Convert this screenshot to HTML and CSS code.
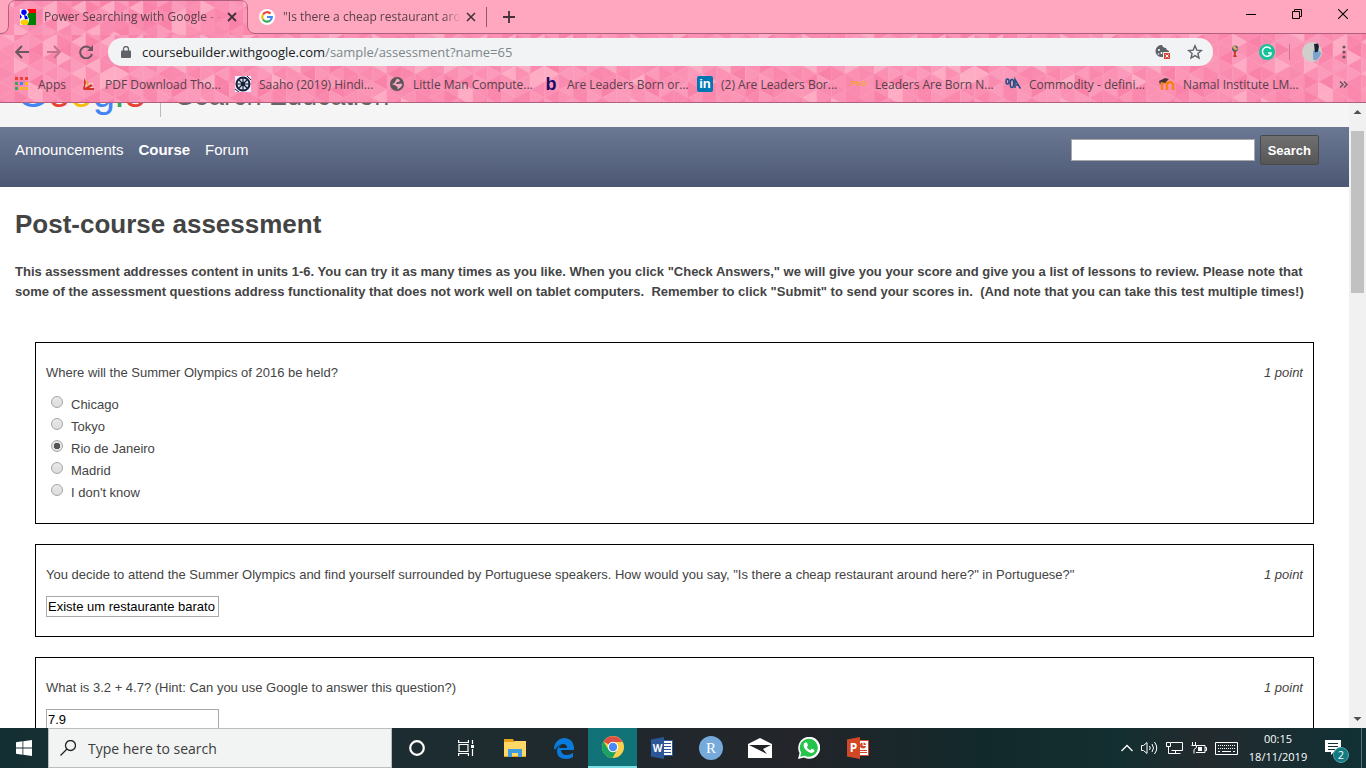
FILE: index.html
```html
<!DOCTYPE html>
<html lang="en">
<head>
<meta charset="utf-8">
<title>Power Searching with Google</title>
<link rel="stylesheet" href="styles.css">
</head>
<body>
<header class="browser">
  <div class="tabstrip">
    <div class="tab tab-active">
      <svg class="tab-shape" width="256" height="35" viewBox="0 0 256 35"><path d="M0 35V33.500C5 33.500 8.500 31 8.500 25V8C8.500 3 11.500 .5 16 .5H240C245 .5 247.500 3 247.500 8V25C247.500 31 251 33.500 256 33.500V35Z" fill="url(#mesh)"/><path d="M0 33.500C5 33.500 8.500 31 8.500 25V8C8.500 3 11.500 .5 16 .5H240C245 .5 247.500 3 247.500 8V25C247.500 31 251 33.500 256 33.500" fill="none" stroke="#b0607e"/></svg>
      <svg class="icon" viewBox="0 0 16 16"><path fill="#fff" d="M0 0h16v16H0z"/><path fill="#f00" d="M7 0h9v5H7z"/><path fill="#008000" d="M7 5l3-1h6v12H7l2-4z"/><path fill="#fff" d="M7 0l2 3-2 3 2 4-1 2-2-2V0z"/><circle cx="4" cy="3.300" r="2.700" fill="#00f"/><path fill="#00f" d="M0 5l2 3-2 2zM4 6l3 1 1 3-3 .5z"/><ellipse cx="4.500" cy="13.200" rx="4" ry="2.800" fill="#fc0"/></svg>
      <span class="tab-title">Power Searching with Google - -</span>
      <button class="close" aria-label="Close tab"><svg width="10" height="10" viewBox="0 0 10 10"><path d="M1 1l8 8M9 1L1 9" stroke="#42323a" stroke-width="1.800"/></svg></button>
    </div>
    <div class="tab">
      <svg class="icon" viewBox="0 0 16 16"><circle cx="8" cy="8" r="8" fill="#fff"/><g fill="none" stroke-width="2.200"><path stroke="#ea4335" d="M4 5.500A4.800 4.800 0 0 1 11.500 4.600"/><path stroke="#fbbc05" d="M4 5.500a4.800 4.800 0 0 0 0 5"/><path stroke="#34a853" d="M4 10.500a4.800 4.800 0 0 0 7.200 1"/><path stroke="#4285f4" d="M11.200 11.500A4.800 4.800 0 0 0 12.800 8H8"/></g></svg>
      <span class="tab-title">"Is there a cheap restaurant around</span>
      <button class="close" aria-label="Close tab"><svg width="10" height="10" viewBox="0 0 10 10"><path d="M1 1l8 8M9 1L1 9" stroke="#42323a" stroke-width="1.600"/></svg></button>
    </div>
    <button class="newtab" aria-label="New tab"><svg width="12" height="12" viewBox="0 0 12 12"><path d="M6 0v12M0 6h12" stroke="#42323a" stroke-width="1.800"/></svg></button>
    <div class="wincontrols">
      <button aria-label="Minimize"><svg width="10" height="10"><path d="M0 5.500h10" stroke="#000"/></svg></button>
      <button aria-label="Restore"><svg width="10" height="10" fill="none" stroke="#000"><path d="M.5 2.500h7v7h-7zM2.500 2V.5h7v7H8"/></svg></button>
      <button aria-label="Close"><svg width="10" height="10"><path d="M0 0l10 10M10 0L0 10" stroke="#000" stroke-width="1.100"/></svg></button>
    </div>
  </div>
  <div class="toolbars">
    <svg class="mesh" aria-hidden="true"><defs><pattern id="mesh" width="430" height="112" patternUnits="userSpaceOnUse"></pattern></defs><rect width="100%" height="100%" fill="url(#mesh)"/></svg>
    <div class="toolbar">
      <button aria-label="Back"><svg width="14" height="14" viewBox="0 0 14 14"><path d="M7 1L1.200 7 7 13M1.500 7H14" fill="none" stroke="#6b5560" stroke-width="2"/></svg></button>
      <button aria-label="Forward"><svg width="14" height="14" viewBox="0 0 14 14"><path d="M7 1l5.800 6L7 13M12.500 7H0" fill="none" stroke="#c5718e" stroke-width="2"/></svg></button>
      <button aria-label="Reload"><svg width="14" height="14" viewBox="0 0 14 14"><path d="M12 3.800A6 6 0 1 0 13 9" fill="none" stroke="#6b5560" stroke-width="2"/><path d="M14 0v6H8z" fill="#6b5560"/></svg></button>
      <div class="omnibox">
        <svg width="10" height="12" viewBox="0 0 10 12"><path d="M1 4.500h8q1 0 1 1V11q0 1-1 1H1q-1 0-1-1V5.500q0-1 1-1z" fill="#5f6368"/><path d="M2.500 5V3a2.500 2.500 0 0 1 5 0v2" fill="none" stroke="#5f6368" stroke-width="1.300"/></svg>
        <span class="url">coursebuilder.withgoogle.com<span class="path">/sample/assessment?name=65</span></span>
        <svg width="16" height="16" viewBox="0 0 16 16"><path fill="#5f6368" d="M7 1q1 3 4 3 0 2 3 3v6H6A6 6 0 0 1 7 1z"/><circle cx="4" cy="6" r="1" fill="#fff"/><circle cx="6.500" cy="9" r="1" fill="#fff"/><circle cx="3.500" cy="10" r=".8" fill="#fff"/><path fill="#db4437" stroke="#f1f3f4" d="M8.500 8.500h7v7h-7z"/><path d="M10.500 10.500l3 3m0-3l-3 3" stroke="#fff"/></svg>
        <svg width="16" height="16" viewBox="0 0 16 16"><path d="M8 1.800l1.800 4.300 4.600.4-3.500 3 1.100 4.600-4-2.500-4 2.500 1.100-4.600-3.500-3 4.600-.4z" fill="none" stroke="#5f6368" stroke-width="1.400"/></svg>
      </div>
      <button aria-label="Football extension"><svg width="16" height="16" viewBox="0 0 16 16"><circle cx="8" cy="4.500" r="3" fill="#375f70"/><path d="M5 3q1-1.500 3-1.500l1 2 2 1-2 2-2-1z" fill="#d9a25d"/><path d="M6.500 7h3l-1 3 1.500 3H6l1-3z" fill="#c83932"/></svg></button>
      <button aria-label="Grammar extension"><svg width="16" height="16" viewBox="0 0 16 16"><circle cx="8" cy="8" r="8" fill="#15c39a"/><path d="M11.800 5A4.600 4.600 0 1 0 12 10V9H9" fill="none" stroke="#fff" stroke-width="1.500"/></svg></button>
      <span class="divider"></span>
      <button aria-label="Profile"><svg width="20" height="20" viewBox="0 0 20 20"><circle cx="10" cy="10" r="10" fill="#cfd0cc"/><path d="M11 9l3-2 5 3.500q-.5 5-5 8l-3-1z" fill="#7ea4cf"/><path d="M12 2l4-.5 1 3-1 5-3 1z" fill="#172232"/></svg></button>
      <button aria-label="Menu"><svg width="4" height="14"><circle cx="2" cy="2" r="1.600" fill="#6b5560"/><circle cx="2" cy="7" r="1.600" fill="#6b5560"/><circle cx="2" cy="12" r="1.600" fill="#6b5560"/></svg></button>
    </div>
    <nav class="bookmarks" aria-label="Bookmarks">
      <a class="apps" href="#"><svg class="icon" viewBox="0 0 16 16"><path fill="#ea4335" d="M1 1h3v3H1zM6 1h3v3H6zM11 1h3v3h-3z"/><path fill="#34a853" d="M1 6h3v3H1z"/><path fill="#4285f4" d="M6 6h3v3H6z"/><path fill="#fbbc05" d="M11 6h3v3h-3zM6 11h3v3H6zM11 11h3v3h-3z"/><path fill="#34a853" d="M1 11h3v3H1z"/></svg>Apps</a>
      <a href="#"><svg class="icon" viewBox="0 0 16 16"><path fill="#f8c9cf" d="M4 7h8v7H4z"/><path fill="#d5342b" d="M3 2l2 4-1 6 6-4 2 2-4 2h5v2H3q-2-2 0-4z"/><path fill="#e6a626" d="M5 3l1 7 2-2z"/></svg>PDF Download Tho...</a>
      <a href="#"><svg class="icon" viewBox="0 0 16 16"><path fill="#eef" d="M0 0h16v16H0z"/><circle cx="8" cy="8" r="6.500" fill="#dfe5f0" stroke="#131d38" stroke-width="2"/><path d="M8 2v12M2 8h12M4 4l8 8M12 4l-8 8" stroke="#131d38" stroke-width="1.200"/><circle cx="8" cy="8" r="2" fill="#131d38"/><path d="M0 13l4 3M12 0l4 4" stroke="#131d38"/></svg>Saaho (2019) Hindi...</a>
      <a href="#"><svg class="icon" viewBox="0 0 16 16"><circle cx="8" cy="8" r="7" fill="#5b5558"/><path fill="#f9a9c2" d="M8 2.500l3 1.500-1 2H8L7 8h2l3-.5 1.500 1-2 3-3 2v-2.500l-2-1.500-4-1.500 2.500-.5z"/></svg>Little Man Compute...</a>
      <a href="#"><b class="icon letter-b">b</b>Are Leaders Born or...</a>
      <a href="#"><b class="icon linkedin">in</b>(2) Are Leaders Bor...</a>
      <a href="#"><b class="icon phd">PhD</b>Leaders Are Born N...</a>
      <a href="#"><svg class="icon" viewBox="0 0 16 16" fill="none" stroke="#174f86" stroke-width="1.500"><ellipse cx="2.500" cy="5.500" rx="1.500" ry="2.500"/><ellipse cx="7" cy="7.500" rx="1.800" ry="4"/><path d="M10 12V3.500l5.500 9M11 9h2"/></svg>Commodity - defini...</a>
      <a href="#"><svg class="icon" viewBox="0 0 16 16"><path d="M3 14V8q3-4 5 0v6-6q3-4 6 0v6" fill="none" stroke="#f98012" stroke-width="2.400"/><path d="M0 5l6-3 4 1-4 4-4-1-1 3z" fill="#4a3535"/></svg>Namal Institute LM...</a>
      <button class="more" aria-label="More bookmarks"><svg width="9" height="7" viewBox="0 0 9 7"><path d="M1 .5l3 3-3 3M5 .5l3 3-3 3" fill="none" stroke="#6b5560" stroke-width="1.500"/></svg></button>
    </nav>
  </div>
</header>

<div class="viewport">
  <main class="page">
    <div class="masthead">
      <span class="logo"><span class="blue">G</span><span class="red">o</span><span class="yellow">o</span><span class="blue">g</span><span class="green">l</span><span class="red">e</span></span>
      <span class="product">Search Education</span>
    </div>
    <nav class="coursenav">
      <a href="#">Announcements</a>
      <a href="#" class="current">Course</a>
      <a href="#">Forum</a>
      <form class="search"><input type="text" aria-label="Search course"><button type="button">Search</button></form>
    </nav>
    <div class="content">
      <h1>Post-course assessment</h1>
      <p class="intro">This assessment addresses content in units 1-6. You can try it as many times as you like. When you click "Check Answers," we will give you your score and give you a list of lessons to review. Please note that some of the assessment questions address functionality that does not work well on tablet computers.&nbsp; Remember to click "Submit" to send your scores in.&nbsp; (And note that you can take this test multiple times!)</p>
      <div class="questions">
        <section class="question">
          <div class="prompt"><span>Where will the Summer Olympics of 2016 be held?</span><em>1 point</em></div>
          <div class="options">
            <label><input type="radio" name="q1">Chicago</label>
            <label><input type="radio" name="q1">Tokyo</label>
            <label><input type="radio" name="q1" checked>Rio de Janeiro</label>
            <label><input type="radio" name="q1">Madrid</label>
            <label><input type="radio" name="q1">I don't know</label>
          </div>
        </section>
        <section class="question">
          <div class="prompt"><label for="q2">You decide to attend the Summer Olympics and find yourself surrounded by Portuguese speakers. How would you say, "Is there a cheap restaurant around here?" in Portuguese?"</label><em>1 point</em></div>
          <input class="answer" id="q2" type="text" value="Existe um restaurante barato por aqui?">
        </section>
        <section class="question">
          <div class="prompt"><label for="q3">What is 3.2 + 4.7? (Hint: Can you use Google to answer this question?)</label><em>1 point</em></div>
          <input class="answer" id="q3" type="text" value="7.9">
        </section>
      </div>
    </div>
  </main>
  <div class="scrollbar" aria-hidden="true">
    <svg width="17" height="17"><path d="M4.500 11L8.500 7l4 4z" fill="#505050"/></svg>
    <div class="track"><div class="thumb"></div></div>
    <svg width="17" height="17"><path d="M4.500 6l4 4 4-4z" fill="#505050"/></svg>
  </div>
</div>

<footer class="taskbar">
  <button class="start" aria-label="Start"><svg width="16" height="16" viewBox="0 0 16 16"><path fill="#fff" d="M0 2.200L6.500 1.300V7.500H0zM7.300 1.200L16 0v7.500H7.300zM0 8.500h6.500v6.200L0 13.800zM7.300 8.500H16V16l-8.700-1.200z"/></svg></button>
  <label class="wsearch"><svg width="16" height="16" viewBox="0 0 16 16"><circle cx="10.500" cy="5.500" r="5" fill="none" stroke="#222" stroke-width="1.300"/><path d="M7 9L.5 15.500" stroke="#222" stroke-width="1.300"/></svg><input type="text" placeholder="Type here to search" aria-label="Type here to search"></label>
  <button aria-label="Cortana"><svg width="16" height="16"><circle cx="8" cy="8" r="6.800" fill="none" stroke="#fff" stroke-width="2.200"/></svg></button>
  <button aria-label="Task view"><svg width="16" height="16" fill="none" stroke="#fff" stroke-width="1.200"><path d="M1 4.500h9v7H1zM.6 0v2.500h9.800V0M.6 16v-2.500h9.800V16M14.500 0v4M14.500 9v7"/><path d="M13 5h3v3h-3z" fill="#fff" stroke="none"/></svg></button>
  <button aria-label="File Explorer"><svg width="22" height="18" viewBox="0 0 22 18"><path fill="#e5a217" d="M0 0h9l1 2h12v16H0z"/><path fill="#ffd767" d="M0 3h10l1-1h11v15H0z"/><path fill="#3d9de0" d="M4 18v-8h14v8h-4v-4H8v4z"/></svg></button>
  <button aria-label="Edge"><svg width="20" height="21" viewBox="0 0 20 21"><path fill="#0a7bdb" d="M0 10C1 3 6 0 11 0q8 1 9 9v3H7q0 5 6 5 3 0 6-2v4q-3 2-7 2-9 0-9-8 0-5 5-7-3 2-3 4h8q0-4-4-4-5 0-8 6z"/></svg></button>
  <button class="running" aria-label="Chrome"><svg width="22" height="22" viewBox="0 0 22 22"><circle cx="11" cy="11" r="11" fill="#fcd04b"/><path fill="#de5044" d="M11 11L1.500 5.500A11 11 0 0 1 20.600 6H11z"/><path fill="#1ba261" d="M1.500 5.500A11 11 0 0 0 10.500 22L15.500 13 11 11 6.500 13.500z"/><circle cx="11" cy="11" r="5.200" fill="#fff"/><circle cx="11" cy="11" r="4.200" fill="#4a8af4"/></svg></button>
  <button aria-label="Word"><svg width="22" height="22" viewBox="0 0 22 22"><path fill="#fff" stroke="#2b579a" d="M11 3.500h10.500v15H11z"/><path stroke="#2b579a" d="M13 6.500h7M13 9.500h7M13 12.500h7M13 15.500h7"/><path fill="#2b579a" d="M0 2.500L13 0v22L0 19.500z"/><text x="6.500" y="15" text-anchor="middle" class="tile-letter">W</text></svg></button>
  <button aria-label="R"><svg width="24" height="24"><circle cx="12" cy="12" r="12" fill="#75aadb"/><text x="12" y="17" text-anchor="middle" class="r-letter">R</text></svg></button>
  <button aria-label="Mail"><svg width="24" height="20" viewBox="0 0 24 20"><path fill="#fff" d="M0 6L12 0l12 6v14H0z"/><path fill="#202428" d="M1 7h22l-8 4 4 5-8-4z"/></svg></button>
  <button aria-label="WhatsApp"><svg width="22" height="22" viewBox="0 0 22 22"><path fill="#fff" d="M0 22l1.500-6A11 11 0 1 1 6 20.500z"/><path fill="#25c44a" d="M2.200 19.800l1.100-4A9 9 0 1 1 6.500 18.700z"/><path fill="#fff" d="M7 5.500h2l1 3-1.200 1.500q1.200 2.500 3.500 3.200l1.500-1.700 2.700 1.500q-.2 3-3.500 3Q6.500 14 5.500 8.500 5.500 6.500 7 5.500z"/></svg></button>
  <button aria-label="PowerPoint"><svg width="22" height="22" viewBox="0 0 22 22"><path fill="#fff" stroke="#d24726" d="M11 3.500h10.500v15H11z"/><circle cx="16" cy="8.500" r="3" fill="#d24726"/><path d="M16 8.500V5M16 8.500h4" stroke="#fff"/><path stroke="#d24726" d="M13 13.500h7M13 15.500h7"/><path fill="#d24726" d="M0 2.500L13 0v22L0 19.500z"/><text x="6.500" y="15" text-anchor="middle" class="tile-letter tile-wide">P</text></svg></button>
  <div class="tray">
    <svg width="12" height="8"><path d="M.5 7L6 1.500 11.500 7" fill="none" stroke="#fff" stroke-width="1.300"/></svg>
    <svg width="17" height="14" fill="none" stroke="#fff"><path d="M.5 4.500h2l3.500-3v11l-3.500-3h-2zM8.500 5q1.500 2 0 4M11 3q3 4 0 8M13.500 1q4.500 6 0 12"/></svg>
    <svg width="17" height="14" fill="none" stroke="#fff"><path d="M5 1.500h11.500v8H5.500M.5 1.500h4v4h-4zM2.500 5.500v7h12M9.500 10v2"/></svg>
    <svg width="16" height="13" fill="none" stroke="#fff"><path d="M5.500 3.500h8.500v7H5M14 5.500h1.500v3H14M1.500 0v3M4.500 0v3M.5 3.500h5v2l-2.500 2v4"/><path d="M7 5h4v4H7z" fill="#fff" stroke="none"/></svg>
    <svg width="23" height="13" fill="none" stroke="#fff"><path d="M.5.5h22v12H.5z"/><path d="M3 3.500h17M3 6.500h17" stroke-dasharray="1 1"/><path d="M3 9.500h2M7 9.500h9M18 9.500h2"/></svg>
    <div class="clock"><span>00:15</span><span>18/11/2019</span></div>
    <div class="notice"><svg width="16" height="16"><path d="M0 0h16v12H9l-3 3v-3H0z" fill="#fff"/><path d="M3 3.500h10M3 6.500h10M3 9.500h7" stroke="#123034"/></svg><span class="count">2</span></div>
  </div>
</footer>
<script src="mesh.js"></script>
</body>
</html>
```
FILE: styles.css
```css
* { box-sizing: border-box; }
body {
  margin: 0;
  height: 100vh;
  display: flex;
  flex-direction: column;
  overflow: hidden;
  background: #fff;
  font-family: "Liberation Sans", Arial, sans-serif;
  font-size: 13px;
  color: #444;
}
button { border: 0; padding: 0; background: none; font: inherit; color: inherit; }
svg { display: block; flex: none; }
a { color: inherit; text-decoration: none; }
.icon { width: 16px; height: 16px; flex: none; }

/* Browser window */
.browser, .taskbar { font-family: "Open Sans", "Noto Sans", sans-serif; font-size: 12px; flex: none; }
.tabstrip { display: flex; height: 33px; background: #ffa7bf; position: relative; z-index: 1; }
.tab { display: flex; align-items: center; gap: 8px; width: 239px; padding: 0 10px 0 11px; position: relative; color: #57404a; background: linear-gradient(#8c5a6b, #8c5a6b) right / 1px 20px no-repeat; }
.tab-active { width: 248px; padding-left: 20px; background: none; }
.tab-shape { position: absolute; left: 0; top: 0; }
.tab > :not(.tab-shape) { position: relative; }
.tab-title { flex: 1; margin-right: -4px; overflow: hidden; white-space: nowrap; mask-image: linear-gradient(90deg, #000 90%, transparent); }
.close { width: 12px; display: grid; place-items: center; }
.newtab { width: 44px; display: grid; place-items: center; }
.wincontrols { margin-left: auto; display: flex; }
.wincontrols button { width: 46px; height: 28px; display: grid; place-items: center; }
.toolbars { position: relative; border-top: 1px solid #b0607e; border-bottom: 1px solid #b0607e; }
.mesh { position: absolute; top: 0; left: 0; width: 100%; height: 100%; }
.toolbar { position: relative; display: flex; align-items: center; height: 36px; padding: 0 6px; }
.toolbar > button { width: 32px; height: 32px; display: grid; place-items: center; flex: none; }
.divider { width: 1px; height: 16px; margin: 0 6px; background: #c87892; }
.omnibox { flex: 1; display: flex; align-items: center; gap: 16px; height: 28px; margin: 0 6px; padding: 0 10px 0 13px; border-radius: 14px; background: #f1f3f4; }
.url { flex: 1; margin-left: -5px; font-size: 13px; color: #202124; white-space: nowrap; }
.path { color: #80868b; }
.bookmarks { position: relative; display: flex; align-items: center; height: 32px; padding: 0 18px 4px 14px; color: #57404a; }
.bookmarks a { display: flex; align-items: center; gap: 8px; width: 154px; white-space: nowrap; }
.bookmarks .apps { width: 67px; }
.more { margin-left: auto; }
.letter-b, .linkedin, .phd { font-family: "Liberation Sans", Arial, sans-serif; text-align: center; line-height: 16px; }
.letter-b { color: #1b0a68; font-size: 18px; }
.linkedin { background: #0077b5; color: #fff; font-size: 13px; border-radius: 2px; }
.phd { color: #f5a33c; font-size: 8px; }

/* Course page */
.viewport { flex: 1; min-height: 0; display: flex; overflow: hidden; }
.page { flex: 1; min-width: 0; overflow: hidden; }
.masthead { display: flex; align-items: flex-end; height: 80px; margin-top: -56px; padding: 0 15px 10px 17px; background: #f5f5f5; }
.logo { font-size: 40px; line-height: 48px; padding-right: 14px; margin-right: 15px; border-right: 1px solid #bbb; }
.product { font-size: 27px; line-height: 42px; color: #666; }
.blue { color: #4285f4; }
.red { color: #ea4335; }
.yellow { color: #fbbc05; }
.green { color: #34a853; }
.coursenav { display: flex; align-items: flex-start; gap: 15px; height: 60px; padding: 8px 30px 0 15px; background: linear-gradient(#6b7894, #4c5873); color: #fff; font-size: 15px; line-height: 30px; }
.current { font-weight: bold; }
.search { margin-left: auto; display: flex; align-items: center; gap: 5px; }
.search input { width: 184px; height: 22px; border: 1px solid #a9a9a9; background: #fff; }
.search button { height: 30px; padding: 0 7px; border: 1px solid #4a4a4a; border-radius: 2px; background: linear-gradient(#707070, #565656); color: #fff; font-size: 13px; font-weight: bold; }
.content { padding: 22px 15px; }
h1 { margin: 0; font-size: 26px; line-height: 30px; }
.intro { margin: 23px 0 40px; font-weight: bold; line-height: 20px; }
.questions { display: flex; flex-direction: column; gap: 20px; padding: 0 20px; }
.question { border: 1px solid #000; padding: 20px 10px 19px; }
.prompt { display: flex; justify-content: space-between; gap: 20px; line-height: 20px; margin-bottom: 11px; }
.prompt em { flex: none; }
.options label { display: flex; gap: 8px; line-height: 22px; }
.options input { appearance: none; width: 12px; height: 12px; margin: 2px 0 0 5px; border: 1px solid #a5a5a5; border-radius: 50%; background: linear-gradient(#e9e9e9, #dcdcdc); }
.options input:checked { background: radial-gradient(circle, #555 0 3px, #e4e4e4 3px); }
.answer { display: block; width: 173px; height: 21px; padding: 1px; border: 1px solid #a9a9a9; font: 13px "Liberation Sans", Arial, sans-serif; color: #000; }
.scrollbar { width: 17px; display: flex; flex-direction: column; background: #f1f1f1; }
.track { flex: 1; padding: 11px 2px 0; }
.thumb { height: 28%; background: #c1c1c1; }

/* Taskbar */
.taskbar { display: flex; height: 40px; background: linear-gradient(90deg, #142f33, #1d2c30 33%, #23252a 58%, #12292b 72%, #142f31 82%, #232a2e 88%, #103135); color: #fff; }
.taskbar > button { width: 49px; display: grid; place-items: center; }
.taskbar > .start { width: 48px; }
.taskbar > .running { background: #117278; border-bottom: 2px solid #7ddfe3; }
.wsearch { width: 344px; display: flex; align-items: center; gap: 12px; padding: 0 11px; border: 1px solid #bbb; background: #f2f3f3; }
.wsearch input { flex: 1; min-width: 0; border: 0; padding: 0; background: none; font: 14px "Open Sans", "Noto Sans", sans-serif; }
.wsearch input::placeholder { color: #3c3c3c; opacity: 1; }
.tile-letter { font: bold 10px "Open Sans", sans-serif; fill: #fff; }
.tile-wide { font-size: 12px; }
.r-letter { font: 15px "Liberation Serif", serif; fill: #fff; }
.tray { margin-left: auto; display: flex; align-items: center; gap: 8px; margin-right: 4px; padding-right: 12px; border-right: 1px solid #5a7072; }
.clock { display: flex; flex-direction: column; align-items: center; width: 64px; font-size: 11px; line-height: 18px; }
.notice { position: relative; width: 24px; margin-left: 7px; }
.count { position: absolute; left: 8px; top: 7px; width: 16px; height: 16px; border-radius: 50%; background: #127a82; border: 1px solid #58a3a7; font-size: 11px; line-height: 14px; text-align: center; }
```
FILE: mesh.js
```js
// Fills the theme pattern with two-tone pink triangles in staggered columns.
const pattern = document.getElementById("mesh");
const shades = ["#fa8bb0", "#fb90b3", "#fa87ac", "#fb96b6", "#fb9aba", "#f982a9", "#fb92b4", "#fdacc4"];
const column = 14 + 1 / 3;
const half = 8;
let seed = 7;
function pick() {
  seed = (seed * 16807) % 2147483647;
  return shades[seed % shades.length];
}
function triangle(points) {
  const shape = document.createElementNS("http://www.w3.org/2000/svg", "polygon");
  shape.setAttribute("points", points);
  const color = pick();
  shape.setAttribute("fill", color);
  shape.setAttribute("stroke", color);
  shape.setAttribute("stroke-width", "0.5");
  pattern.appendChild(shape);
}
for (let c = 0; c < 30; c++) {
  const x = c * column;
  const r = x + column;
  for (let k = -1; k < 8; k++) {
    const y = k * 2 * half + (c % 2) * half;
    triangle(`${x},${y} ${r},${y + half} ${x},${y + 2 * half}`);
    triangle(`${r},${y + half} ${r},${y + 3 * half} ${x},${y + 2 * half}`);
  }
}
```
